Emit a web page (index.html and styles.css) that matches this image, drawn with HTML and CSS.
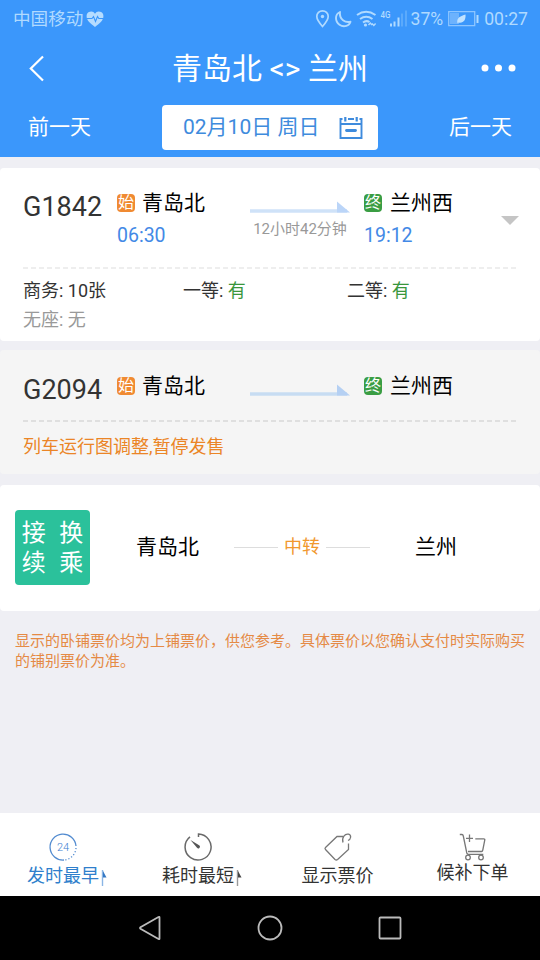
FILE: index.html
```html
<!DOCTYPE html>
<html lang="zh-CN">
<head>
<meta charset="utf-8">
<title>青岛北 - 兰州</title>
<link rel="stylesheet" href="styles.css">
</head>
<body>
<div class="screen">
  <header class="top">
    <div class="status">
      <span>中国移动</span>
      <svg class="heart" width="18" height="17" viewBox="0 0 18 17"><path d="M9 16C4 12 .6 9.400.6 5.300A4.500 4.500 0 0 1 9 2.800a4.500 4.500 0 0 1 8.400 2.500C17.400 9.400 14 12 9 16Z" fill="#b5dcff"/><path d="M1 7.500h5l1.500-2 2 5 2-5 1.300 2H17" fill="none" stroke="#3b97fb" stroke-width="1.100"/></svg>
      <span class="grow"></span>
      <svg width="92" height="22" viewBox="0 0 92 22" fill="none" stroke="#b0daff">
        <path d="M7.500 18.500C4 14.500 1.800 11.700 1.800 8.500a5.700 5.700 0 0 1 11.400 0C13.200 11.700 11 14.500 7.500 18.500Z" stroke-width="1.700"/>
        <circle cx="7.500" cy="8.500" r="1.700" fill="#b0daff" stroke="none"/>
        <path d="M25 4C19.500 6.500 20 13.500 24.500 16.700c4.500 3.100 10 .8 11-3-5 1.300-11.500-2-10.500-9.700Z" stroke-width="1.900" stroke-linejoin="round"/>
        <path d="M42 7q9-6.500 18.500 0M45 11q6.200-4.500 12.500 0M48 14.500q3.300-2.500 6.500-.5" stroke-width="2"/>
        <circle cx="50.500" cy="17" r="1.600" fill="#b0daff" stroke="none"/>
        <path d="M53.500 17l1.800-2 1.800 2M57 15.500l1.800 2 1.800-2" stroke-width="1.400"/>
        <text class="net" x="65.500" y="9.500" textLength="10" lengthAdjust="spacingAndGlyphs">4G</text>
        <path d="M76 18.500v-3M79.500 18.500v-5M83.500 18.500V9.500" stroke-width="2"/>
        <path d="M87 18.500V5.500M91 18.500V2.500" stroke-width="2" opacity=".28"/>
      </svg>
      <span class="pct">37%</span>
      <svg class="battery" width="31" height="16" viewBox="0 0 31 16"><path d="M.7.7h26v14H.7z" fill="none" stroke="#8dc5ff" stroke-width="1.300"/><path d="M2 2h9v11H2z" fill="#6cb2fd"/><path d="M29.500 4v8" stroke="#b0daff" stroke-width="2"/><path d="M9.500 12.500C8 6.500 13 5 17.500 3.500c.5 5.500-2 9-7 8Z" fill="#c0e2ff"/></svg>
      <span>00:27</span>
    </div>
    <div class="titlebar">
      <svg width="16" height="28" viewBox="0 0 16 28"><path d="M14 1.500 1.800 13.500l12.200 12" fill="none" stroke="#fff" stroke-width="2.200"/></svg>
      <h1>青岛北 &lt;&gt; 兰州</h1>
      <svg width="36" height="10" viewBox="0 0 36 10" fill="#fff"><circle cx="4" cy="4" r="3.500"/><circle cx="17.500" cy="4" r="3.500"/><circle cx="31" cy="4" r="3.500"/></svg>
    </div>
    <div class="days">
      <span>前一天</span>
      <div class="date"><span>02月10日 周日</span>
        <svg width="24" height="24" viewBox="0 0 24 24" fill="none" stroke="#3e8bdd" stroke-width="1.900"><path d="M3.500 3H1.500v19h21V3h-2M9 3h6M1.500 8h21"/><path d="M6.300 1v4.500M17.700 1v4.500" stroke-width="2.200"/><path d="M7.500 14.500h9" stroke-width="2.800" stroke-linecap="round"/></svg>
      </div>
      <span>后一天</span>
    </div>
  </header>

  <main>
    <section class="card train">
      <div class="route">
        <div class="no">G1842</div>
        <div class="stop from"><div class="station"><i class="tag start">始</i>青岛北</div><div class="time">06:30</div></div>
        <div class="span"><svg width="100" height="12" viewBox="0 0 100 12"><path d="M0 10h97" stroke="#cfe2f8" stroke-width="3.500"/><path d="M87 .5v11h13Z" fill="#bbd5f8"/></svg><span>12小时42分钟</span></div>
        <div class="stop"><div class="station"><i class="tag end">终</i>兰州西</div><div class="time">19:12</div></div>
        <svg class="caret" width="18" height="9" viewBox="0 0 18 9"><path d="M0 0h18L9 9Z" fill="#c5c5c5"/></svg>
      </div>
      <svg class="rule" width="495" height="2"><path d="M0 1h495" stroke="#e9e9e9" stroke-width="1.500" stroke-dasharray="5 3"/></svg>
      <div class="seats"><span>商务: 10张</span><span>一等: <b>有</b></span><span>二等: <b>有</b></span><span class="none">无座: 无</span></div>
    </section>

    <section class="card train halted">
      <div class="route">
        <div class="no">G2094</div>
        <div class="stop from"><div class="station"><i class="tag start">始</i>青岛北</div></div>
        <div class="span"><svg width="100" height="12" viewBox="0 0 100 12"><path d="M0 10h97" stroke="#c7dcf2" stroke-width="3.500"/><path d="M87 .5v11h13Z" fill="#b5d0f3"/></svg></div>
        <div class="stop"><div class="station"><i class="tag end">终</i>兰州西</div></div>
      </div>
      <svg class="rule" width="495" height="2"><path d="M0 1h495" stroke="#d8d8d8" stroke-width="1.500" stroke-dasharray="5 3"/></svg>
      <p class="alert">列车运行图调整,暂停发售</p>
    </section>

    <section class="card transfer">
      <div class="badge"><span>接</span><span>换</span><span>续</span><span>乘</span></div>
      <span class="a">青岛北</span>
      <div class="via"><hr><span>中转</span><hr></div>
      <span class="b">兰州</span>
    </section>

    <p class="notice">显示的卧铺票价均为上铺票价，供您参考。具体票价以您确认支付时实际购买的铺别票价为准。</p>
  </main>

  <nav class="tabs">
    <div class="tab active">
      <svg width="30" height="30" viewBox="0 0 30 30" fill="none" stroke="#528bd0" stroke-width="1.300"><path d="M16 28A13 13 0 1 1 28 14"/><path d="M28 16A13 13 0 0 1 17 28" stroke-dasharray="1.200 2"/><text class="hours" x="15" y="19">24</text></svg>
      <div class="label">发时最早<svg width="6" height="16" viewBox="0 0 6 16"><path d="M1.500 0v16" stroke="#8ab5e5" stroke-width="1.400"/><path d="M2 1 5.500 7.500H2Z" fill="#3478c4"/></svg></div>
    </div>
    <div class="tab">
      <svg width="30" height="30" viewBox="0 0 30 30" fill="none" stroke="#696969" stroke-width="1.500"><path d="M15.500 5V2A13 13 0 1 1 7 4.800"/><path d="m7.500 8 9 5.500a1.600 1.600 0 0 1-2.500 2.300Z" fill="#555" stroke="none"/></svg>
      <div class="label">耗时最短<svg width="6" height="16" viewBox="0 0 6 16"><path d="M1.500 0v16" stroke="#999" stroke-width="1.400"/><path d="M2 1 5.500 7.500H2Z" fill="#444"/></svg></div>
    </div>
    <div class="tab">
      <svg width="30" height="30" viewBox="0 0 30 30" fill="none" stroke="#777" stroke-width="1.300"><path d="M20 4.500h-6L2.500 15.500q-1 1 0 2L12 27.500q1.300 1 2.600 0L25.500 17.500v-6"/><path d="M20 10.500c-1.500-5 2-9 5.500-8.300 3.300 1 2.500 5-.5 6.300"/></svg>
      <div class="label">显示票价</div>
    </div>
    <div class="tab cart">
      <svg width="30" height="30" viewBox="0 0 30 30" fill="none" stroke="#777" stroke-width="1.300"><path d="M1.800 2.500H4q1 0 1.300 1.500l3.500 17q.3 1.300 1.500 1.300h15M10 19.500h13.500q1 0 1.300-1.500l2-10q.2-1.200-1-1.200h-8.500M11.500 2.500v7.500M8 6.300h7"/><circle cx="10" cy="25.500" r="2.300"/><circle cx="23" cy="25.500" r="2.300"/></svg>
      <div class="label">候补下单</div>
    </div>
  </nav>

  <footer class="system">
    <svg width="28" height="28" viewBox="0 0 28 28"><path d="M23.500 3.500v21q0 1-1 .5l-18-10.200q-1-.8 0-1.600l18-10.200q1-.5 1 .5Z"/></svg>
    <svg width="28" height="28" viewBox="0 0 28 28"><circle cx="14" cy="14" r="11.500"/></svg>
    <svg width="28" height="28" viewBox="0 0 28 28"><rect x="3.500" y="3.500" width="21" height="21" rx="1"/></svg>
  </footer>
</div>
</body>
</html>
```
FILE: styles.css
```css
* { box-sizing: border-box; }
body {
  margin: 0;
  font-family: Roboto, "Noto Sans CJK SC", sans-serif;
  color: #333;
}
svg { display: block; flex: none; }
h1, p { margin: 0; font-weight: 400; }
i, b { font-style: normal; font-weight: 400; }
.screen {
  width: 540px;
  height: 960px;
  display: flex;
  flex-direction: column;
  background: #efeff4;
  overflow: hidden;
}
.top { height: 157px; background: #3b97fb; color: #fff; }
.status {
  height: 38px;
  display: flex;
  align-items: center;
  padding: 0 12px 0 13px;
  font-size: 17.600px;
  line-height: 38px;
  color: #b0daff;
}
.heart { margin-left: 3px; }
.grow { flex: 1; }
.net { font: 500 9.500px Roboto, sans-serif; fill: #b0daff; stroke: none; }
.pct { margin-left: 4px; }
.battery { margin: 0 5px; }
.titlebar {
  height: 62px;
  display: flex;
  align-items: center;
  justify-content: space-between;
  padding: 0 23px 0 29px;
}
h1 { font-size: 30px; line-height: 62px; margin-left: 14px; }
.days {
  display: flex;
  justify-content: space-between;
  padding: 5px 28px 0;
  font-size: 21px;
  line-height: 44px;
}
.date {
  width: 216px;
  height: 45px;
  border-radius: 4px;
  background: #fff;
  color: #3e8bdd;
  display: flex;
  align-items: center;
  justify-content: space-between;
  padding: 0 15px 0 21px;
}
.date span { line-height: 42px; margin-bottom: 2px; }
main { flex: 1; padding-top: 11px; }
.card { background: #fff; border-radius: 4px; }
.train { height: 173px; padding: 0 22px 0 23px; }
.route { height: 99px; display: flex; }
.no { width: 94px; font-size: 27px; line-height: 79px; }
.stop { padding-top: 18px; }
.from { width: 133px; }
.station {
  display: flex;
  align-items: center;
  font-size: 21px;
  line-height: 34px;
  color: #000;
}
.tag {
  width: 18px;
  height: 18px;
  border-radius: 4px;
  margin: 0 8px 1px 0;
  color: #fff;
  font-size: 16px;
  line-height: 18px;
  text-align: center;
}
.from .tag { margin-right: 7px; }
.start { background: #f08a32; }
.end { background: #3a9d43; }
.time { font-size: 19.500px; line-height: 32px; color: #4389e6; }
.span { width: 114px; padding-top: 33px; font-size: 15px; line-height: 32px; color: #999; }
.span span { display: block; width: 100px; text-align: center; }
.caret { margin: 48px -1px 0 auto; }
.seats {
  display: grid;
  grid-template-columns: 160px 164px 1fr;
  padding-top: 8px;
  font-size: 18px;
  line-height: 28.500px;
}
.seats b { color: #39963c; }
.seats .none { color: #999; }
.halted { height: 124px; margin-top: 9px; background: #f5f5f5; }
.halted .route { height: 70px; padding-top: 1px; }
.alert { font-size: 18px; line-height: 50px; color: #eb8526; }
.transfer {
  height: 126px;
  margin-top: 11px;
  padding: 0 0 1px 15px;
  display: flex;
  align-items: center;
  font-size: 21px;
  line-height: 30px;
  color: #000;
}
.badge {
  width: 75px;
  height: 75px;
  border-radius: 4px;
  background: #2bc19b;
  color: #fff;
  display: grid;
  grid-template-columns: 1fr 1fr;
  grid-auto-rows: 30px;
  padding-top: 8px;
  font-size: 24px;
  line-height: 30px;
  text-align: center;
}
.a { width: 98px; margin-left: 46px; }
.a, .b { margin-bottom: 2px; }
.via { width: 136px; display: flex; align-items: center; gap: 6px; font-size: 18px; color: #f1982f; margin-bottom: 1px; }
.via hr { flex: 1; height: 1px; border: 0; margin: 0; background: #ddd; }
.b { margin-left: 45px; }
.notice { padding: 20px 15px 0; font-size: 15px; line-height: 20px; color: #e58a45; }
.tabs {
  height: 83px;
  display: grid;
  grid-template-columns: 126px 144px 135px 135px;
  background: #fff;
}
.tab { display: flex; flex-direction: column; align-items: center; padding-top: 19px; }
.label { display: flex; align-items: center; font-size: 18px; line-height: 28px; }
.label svg { margin: 3px -8px 0 2px; }
.active { color: #2f7fcc; }
.hours { font: 300 11px Roboto, sans-serif; fill: #3e80cf; stroke: none; text-anchor: middle; }
.cart .label { margin-top: -3px; }
.system {
  height: 64px;
  display: flex;
  align-items: center;
  justify-content: center;
  gap: 92px;
  background: #000;
}
.system svg { fill: none; stroke: #bbb; stroke-width: 1.800; }
```
